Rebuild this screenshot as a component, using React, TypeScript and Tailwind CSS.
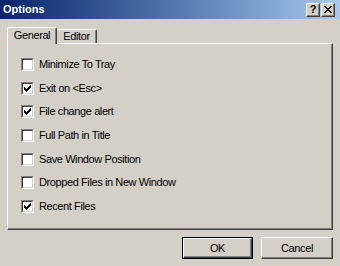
import React from "react";

const CHECK = [
  "......#",
  ".....##",
  "#...###",
  "##.###.",
  "#####..",
  ".###...",
  "..#....",
];

function CheckMark() {
  const rects: React.ReactElement[] = [];
  CHECK.forEach((row, y) =>
    row.split("").forEach((c, x) => {
      if (c === "#") rects.push(<rect key={`${x}-${y}`} x={x} y={y} width={1} height={1} fill="#000" />);
    })
  );
  return (
    <svg width="7" height="7" viewBox="0 0 7 7" shapeRendering="crispEdges">
      {rects}
    </svg>
  );
}

function Checkbox({ checked }: { checked: boolean }) {
  return (
    <div className="w-[13px] h-[13px] shrink-0 border border-t-[#808080] border-l-[#808080] border-b-white border-r-white">
      <div className="w-full h-full bg-white border border-t-[#404040] border-l-[#404040] border-b-[#d4d0c8] border-r-[#d4d0c8] flex items-center justify-center">
        {checked ? <CheckMark /> : null}
      </div>
    </div>
  );
}

function CapBtn({ children }: { children: React.ReactNode }) {
  return (
    <div className="w-[14px] h-[14px] bg-[#d4d0c8] border border-t-white border-l-white border-b-[#404040] border-r-[#404040] shadow-[inset_-1px_-1px_0_#808080] flex items-center justify-center">
      {children}
    </div>
  );
}

function Button({ label, def, w }: { label: string; def?: boolean; w: string }) {
  const inner = (
    <div className="w-full h-full bg-[#d4d0c8] border border-t-white border-l-white border-b-[#404040] border-r-[#404040] shadow-[inset_-1px_-1px_0_#808080] flex items-center justify-center leading-none">
      {label}
    </div>
  );
  if (def) {
    return <div className={`${w} h-[22px] border border-black`}>{inner}</div>;
  }
  return <div className={`${w} h-[22px]`}>{inner}</div>;
}

export default function App() {
  const items: [string, boolean][] = [
    ["Minimize To Tray", false],
    ["Exit on <Esc>", true],
    ["File change alert", true],
    ["Full Path in Title", false],
    ["Save Window Position", false],
    ["Dropped Files in New Window", false],
    ["Recent Files", true],
  ];
  return (
    <div className="w-[340px] h-[266px] bg-[#d4d0c8] flex flex-col font-['Liberation_Sans',Arial,sans-serif] text-black text-[11px] tracking-[-0.4px] overflow-hidden">
      <div className="h-[19px] shrink-0 bg-gradient-to-r from-[#0a246a] to-[#a6caf0] flex items-center justify-between pl-[3px] pr-[5px]">
        <span className="text-white font-bold text-[11px] tracking-normal leading-none">Options</span>
        <div className="flex gap-[1px]">
          <CapBtn>
            <span className="font-bold text-[11px] leading-none tracking-normal">?</span>
          </CapBtn>
          <CapBtn>
            <svg width="8" height="7" viewBox="0 0 8 7" shapeRendering="crispEdges">
              <path d="M0 0h2v1h-2zM6 0h2v1h-2zM1 1h2v1h-2zM5 1h2v1h-2zM2 2h4v1h-4zM3 3h2v1h-2zM2 4h4v1h-4zM1 5h2v1h-2zM5 5h2v1h-2zM0 6h2v1h-2zM6 6h2v1h-2z" fill="#000" />
            </svg>
          </CapBtn>
        </div>
      </div>
      <div className="flex flex-col px-[7px] pt-[8px]">
        <div className="flex items-end h-[16px]">
          <div className="relative top-[1px] z-10 w-[50px] h-[17px] bg-[#d4d0c8] border-l border-t border-r border-l-white border-t-white border-r-[#404040] rounded-t-[2px] shadow-[inset_-1px_0_0_#808080] flex items-center justify-center pb-[1px]">
            General
          </div>
          <div className="w-[40px] h-[14px] bg-[#d4d0c8] border-t border-r border-t-white border-r-[#404040] rounded-tr-[2px] shadow-[inset_-1px_0_0_#808080] flex items-center justify-center">
            Editor
          </div>
        </div>
        <div className="h-[187px] border border-t-white border-l-white border-b-[#404040] border-r-[#404040] shadow-[inset_-1px_-1px_0_#808080] pl-[13px] pt-[14px] flex flex-col gap-[10.7px]">
          {items.map(([label, checked]) => (
            <div key={label} className="flex items-center gap-[5px] h-[13px]">
              <Checkbox checked={checked} />
              <span className="leading-none whitespace-nowrap">{label}</span>
            </div>
          ))}
        </div>
      </div>
      <div className="flex justify-end gap-[8px] pr-[7px] mt-[7px]">
        <Button label="OK" def w="w-[71px]" />
        <Button label="Cancel" w="w-[72px]" />
      </div>
    </div>
  );
}
